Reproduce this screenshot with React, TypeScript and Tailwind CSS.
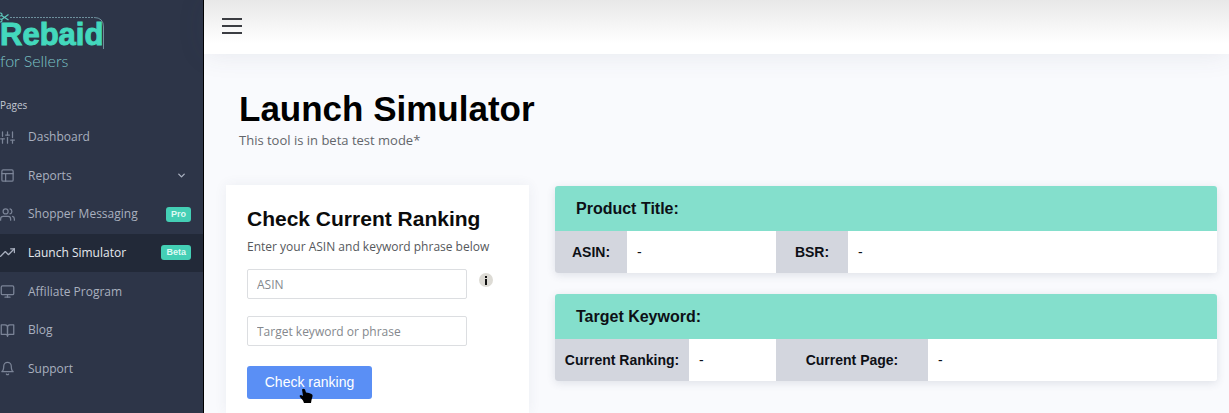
import type { IconType } from "react-icons";
import {
  FiBell,
  FiBookOpen,
  FiChevronDown,
  FiLayout,
  FiMonitor,
  FiSliders,
  FiTrendingUp,
  FiUsers,
} from "react-icons/fi";

type NavItem = {
  label: string;
  icon: IconType;
  badge?: string;
  expandable?: boolean;
  active?: boolean;
};

const navItems: NavItem[] = [
  { label: "Dashboard", icon: FiSliders },
  { label: "Reports", icon: FiLayout, expandable: true },
  { label: "Shopper Messaging", icon: FiUsers, badge: "Pro" },
  { label: "Launch Simulator", icon: FiTrendingUp, badge: "Beta", active: true },
  { label: "Affiliate Program", icon: FiMonitor },
  { label: "Blog", icon: FiBookOpen },
  { label: "Support", icon: FiBell },
];

function Logo() {
  return (
    <a href="#" className="relative block h-[72px] w-[106px] pt-[18px]">
      <svg
        className="absolute top-3 left-0"
        width="106"
        height="40"
        fill="none"
        stroke="#6d8f9c"
      >
        <path d="M10 5.5H94" strokeDasharray="2 1" />
        <path d="M94 5.5Q103.500 5.500 103.500 15V37" />
        <g stroke="#5fc9bd" strokeWidth="1.200">
          <path d="M1.500 3.500L8.500 8M1.500 7.500L8.500 2.500" />
          <circle cx="0.500" cy="2.500" r="1.500" />
          <circle cx="0.500" cy="8.500" r="1.500" />
        </g>
      </svg>
      <span className="block text-[31px] leading-[34px] font-bold text-[#43d8bd] [-webkit-text-stroke:1px_#43d8bd]">
        Rebaid
      </span>
      <span className="block font-[Lato,sans-serif] text-[16px] leading-[18px] font-light whitespace-nowrap text-[#7cc3c6]">
        for Sellers
      </span>
    </a>
  );
}

function Sidebar() {
  return (
    <aside className="w-[204px] shrink-0 border-r border-black bg-[#2d3548]">
      <Logo />
      <p className="mt-[25px] h-[21px] font-['Open_Sans',sans-serif] text-[10px] leading-4 text-[#c3c8d2]">
        Pages
      </p>
      <nav className="grid h-[270px] grid-rows-7">
        {navItems.map(({ label, icon: Icon, badge, expandable, active }) => (
          <a
            key={label}
            href="#"
            className={`flex items-center pr-3 font-['Open_Sans',sans-serif] text-[12px] ${
              active ? "bg-[#222938] text-[#e6e9ef]" : "text-[#a9b0bf]"
            }`}
          >
            <Icon
              className={`mr-[13px] size-[15px] shrink-0 ${active ? "text-[#a9b0bf]" : "text-[#7b8497]"}`}
            />
            <span className="flex-1 whitespace-nowrap">{label}</span>
            {badge && (
              <span className="rounded-[3px] bg-[#44cfb5] px-[5px] font-['Liberation_Sans',sans-serif] text-[9px] leading-[15px] font-bold text-[#dffaf4]">
                {badge}
              </span>
            )}
            {expandable && <FiChevronDown className="mr-1 size-[11px]" strokeWidth={3} />}
          </a>
        ))}
      </nav>
    </aside>
  );
}

function PointerCursor() {
  return (
    <svg
      className="pointer-events-none absolute top-[22px] left-[52px]"
      width="15"
      height="16"
      viewBox="0 0 15 16"
    >
      <path
        d="M3 1.500Q4.500 0 6 1.500L7 4.500L10 5L12.500 6Q14 6.500 13.500 8.500L12.500 12L12 15H5L4 12.500L1 9Q0 7 2 7L4 8Z"
        fill="#000"
      />
    </svg>
  );
}

function RankingForm() {
  const inputClass =
    "block h-[30px] w-[220px] rounded-[2px] border border-[#dcdee1] bg-white px-[9px] font-['Open_Sans',sans-serif] text-[12px] text-[#495057] placeholder:text-[#84888d] placeholder:opacity-100";

  return (
    <form
      className="w-[303px] shrink-0 bg-white px-[21px] pt-[21px] pb-[14px] shadow-[0_0_12px_rgba(60,70,100,0.07)]"
      onSubmit={(e) => e.preventDefault()}
    >
      <h2 className="text-[21px] leading-[26px] font-bold text-[#0b0b0b]">Check Current Ranking</h2>
      <p className="mt-[6px] font-['Open_Sans',sans-serif] text-[12px] leading-[18px] text-[#55585c]">
        Enter your ASIN and keyword phrase below
      </p>
      <div className="mt-[13px] flex items-start">
        <input aria-label="ASIN" placeholder="ASIN" className={inputClass} />
        <button
          type="button"
          aria-label="About ASIN"
          className="mt-1 ml-3 flex size-[14px] items-center justify-center rounded-full bg-[#dddbd5]"
        >
          <svg width="4" height="9" viewBox="0 0 4 9" fill="#111">
            <path d="M1 0h2v2H1zM1 3h2v6H1z" />
          </svg>
        </button>
      </div>
      <input
        aria-label="Target keyword or phrase"
        placeholder="Target keyword or phrase"
        className={`mt-[17px] ${inputClass}`}
      />
      <div className="relative mt-5 w-fit">
        <button
          type="submit"
          className="block h-[33px] w-[125px] rounded-[3px] bg-[#5a8ff5] text-[14px] text-white"
        >
          Check ranking
        </button>
        <PointerCursor />
      </div>
    </form>
  );
}

type ResultTableProps = {
  title: string;
  labels: [string, string];
  widths: [string, string, string];
};

function ResultTable({ title, labels, widths }: ResultTableProps) {
  const labelClass = "bg-[#d3d6de] p-0 text-center font-bold whitespace-nowrap";
  const valueClass = "bg-white py-0 px-[10px]";

  return (
    <table className="w-full table-fixed overflow-hidden rounded-[3px] text-[14px] text-[#0d1016] shadow-[0_2px_8px_rgba(60,70,100,0.14)]">
      <colgroup>
        <col className={widths[0]} />
        <col className={widths[1]} />
        <col className={widths[2]} />
        <col />
      </colgroup>
      <thead>
        <tr className="h-[45px] bg-[#84dfcc]">
          <th colSpan={4} className="py-0 px-[21px] text-left text-[16px] font-bold">
            {title}
          </th>
        </tr>
      </thead>
      <tbody>
        <tr className="h-[42px]">
          <th scope="row" className={labelClass}>{labels[0]}</th>
          <td className={valueClass}>-</td>
          <th scope="row" className={labelClass}>{labels[1]}</th>
          <td className={valueClass}>-</td>
        </tr>
      </tbody>
    </table>
  );
}

export default function App() {
  return (
    <div className="flex min-h-screen bg-[#f9fafd] font-['Liberation_Sans',Arial,sans-serif]">
      <Sidebar />
      <div className="flex min-w-0 flex-1 flex-col">
        <header className="flex h-[54px] items-center bg-linear-to-b from-[#e8e8e8] to-white to-80% px-[18px] shadow-[0_0_28px_rgba(60,70,100,0.10)]">
          <button
            type="button"
            aria-label="Toggle menu"
            className="flex w-5 flex-col gap-[5px] pb-[3px]"
          >
            <span className="h-[2px] w-full bg-[#3b3d42]" />
            <span className="h-[2px] w-full bg-[#3b3d42]" />
            <span className="h-[2px] w-full bg-[#3b3d42]" />
          </button>
        </header>
        <main className="flex flex-1 flex-col pr-3 pl-[22px]">
          <div className="px-[13px] pt-[35px]">
            <h1 className="text-[35px] leading-[40px] font-bold text-black">Launch Simulator</h1>
            <p className="font-['Open_Sans',sans-serif] text-[13px] leading-[22px] text-[#63666b]">
              This tool is in beta test mode*
            </p>
          </div>
          <div className="mt-[34px] flex flex-1 items-stretch gap-[26px]">
            <RankingForm />
            <div className="flex min-w-0 flex-1 flex-col gap-[21px] pt-px">
              <ResultTable
                title="Product Title:"
                labels={["ASIN:", "BSR:"]}
                widths={["w-[72px]", "w-[149px]", "w-[72px]"]}
              />
              <ResultTable
                title="Target Keyword:"
                labels={["Current Ranking:", "Current Page:"]}
                widths={["w-[134px]", "w-[87px]", "w-[152px]"]}
              />
            </div>
          </div>
        </main>
      </div>
    </div>
  );
}
